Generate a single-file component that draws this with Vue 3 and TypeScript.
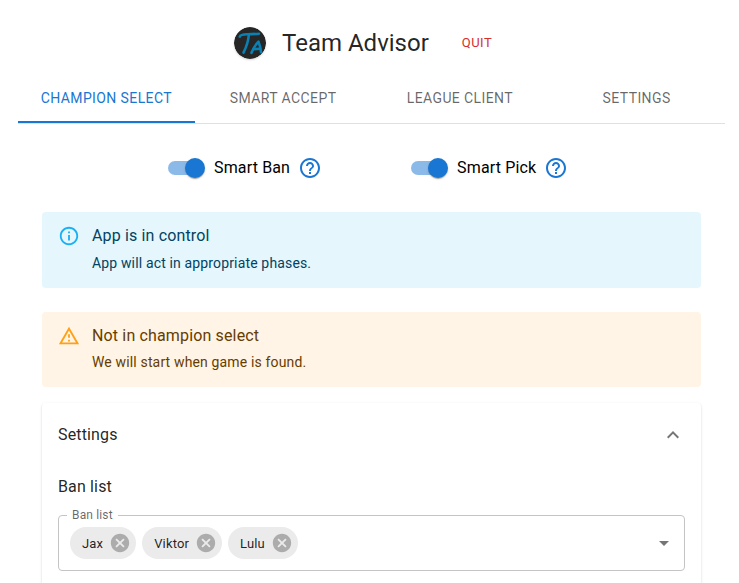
<script setup lang="ts">
import { ref } from 'vue'

interface Toggle { label: string; on: boolean }

const tabs: string[] = ['Champion Select', 'Smart Accept', 'League Client', 'Settings']
const activeTab = ref(0)
const toggles = ref<Toggle[]>([
  { label: 'Smart Ban', on: true },
  { label: 'Smart Pick', on: true },
])
const bans = ref<string[]>(['Jax', 'Viktor', 'Lulu'])
const expanded = ref(true)

function removeBan(name: string): void {
  bans.value = bans.value.filter((b) => b !== name)
}
</script>

<template>
  <main class="app">
    <header class="header">
      <svg class="avatar" viewBox="0 0 32 32">
        <circle cx="16" cy="16" r="16" fill="#262626" />
        <g fill="none" stroke="#0b80b2" stroke-width="2.6" stroke-linecap="round" stroke-linejoin="round">
          <path d="M5.800 9.600C6.500 7.600 9 7.400 13 7.300C17 7.200 21 7 25 6.700" />
          <path d="M14.800 8C14.400 14 12.300 20 9.500 25.600" />
          <path d="M17.500 25.800C19.200 21.500 21.300 17.800 24.500 14.600C25.800 18 26.600 21.500 27 25.200" />
          <path d="M19.500 22.200L26 21.800" />
        </g>
      </svg>
      <h1 class="title">Team Advisor</h1>
      <button class="quit">Quit</button>
    </header>

    <nav class="tabs">
      <button
        v-for="(tab, i) in tabs"
        :key="tab"
        class="tab"
        :class="{ active: i === activeTab }"
        @click="activeTab = i"
      >{{ tab }}</button>
    </nav>

    <section class="panel">
      <div class="toggles">
        <div v-for="t in toggles" :key="t.label" class="toggle">
          <span class="switch" :class="{ on: t.on }" @click="t.on = !t.on"><span class="thumb"></span></span>
          <span class="toggle-label">{{ t.label }}</span>
          <svg class="help" viewBox="0 0 24 24">
            <path d="M11 18h2v-2h-2v2zm1-16C6.480 2 2 6.480 2 12s4.480 10 10 10 10-4.480 10-10S17.520 2 12 2zm0 18c-4.410 0-8-3.590-8-8s3.590-8 8-8 8 3.590 8 8-3.590 8-8 8zm0-14c-2.210 0-4 1.790-4 4h2c0-1.100.9-2 2-2s2 .9 2 2c0 2-3 1.750-3 5h2c0-2.250 3-2.500 3-5 0-2.210-1.790-4-4-4z" />
          </svg>
        </div>
      </div>

      <div class="alert info">
        <svg class="alert-icon" viewBox="0 0 24 24">
          <path d="M11 7h2v2h-2zm0 4h2v6h-2zm1-9C6.480 2 2 6.480 2 12s4.480 10 10 10 10-4.480 10-10S17.520 2 12 2zm0 18c-4.410 0-8-3.590-8-8s3.590-8 8-8 8 3.590 8 8-3.590 8-8 8z" />
        </svg>
        <div class="message">
          <div class="alert-title">App is in control</div>
          <div>App will act in appropriate phases.</div>
        </div>
      </div>

      <div class="alert warning">
        <svg class="alert-icon" viewBox="0 0 24 24">
          <path d="M12 5.990L19.530 19H4.470L12 5.990M12 2L1 21h22L12 2zm1 14h-2v2h2v-2zm0-6h-2v4h2v-4z" />
        </svg>
        <div class="message">
          <div class="alert-title">Not in champion select</div>
          <div>We will start when game is found.</div>
        </div>
      </div>

      <div class="accordion">
        <div class="summary" @click="expanded = !expanded">
          <span>Settings</span>
          <svg class="chevron" :class="{ closed: !expanded }" viewBox="0 0 24 24">
            <path d="M12 8l-6 6 1.410 1.410L12 10.830l4.590 4.580L18 14z" />
          </svg>
        </div>
        <div v-if="expanded" class="details">
          <div class="list-title">Ban list</div>
          <div class="field">
            <span class="field-label">Ban list</span>
            <span v-for="ban in bans" :key="ban" class="chip">
              <span class="chip-label">{{ ban }}</span>
              <svg class="remove" viewBox="0 0 24 24" @click="removeBan(ban)">
                <path d="M12 2C6.470 2 2 6.470 2 12s4.470 10 10 10 10-4.470 10-10S17.530 2 12 2zm5 13.590L15.590 17 12 13.410 8.410 17 7 15.590 10.590 12 7 8.410 8.410 7 12 10.590 15.590 7 17 8.410 13.410 12 17 15.590z" />
              </svg>
            </span>
            <svg class="caret" viewBox="0 0 24 24"><path d="M7 10l5 5 5-5z" /></svg>
          </div>
        </div>
      </div>
    </section>
  </main>
</template>

<style>
body {
  background: #fff;
  overflow: hidden;
}
</style>

<style scoped>
.app {
  box-sizing: border-box;
  width: 739px;
  height: 583px;
  overflow: hidden;
  padding: 11px 14px 0 18px;
  font-family: Roboto, 'Liberation Sans', sans-serif;
  font-size: 16px;
  line-height: 24px;
  letter-spacing: 0.15px;
  color: rgba(0, 0, 0, 0.87);
}
button {
  border: 0;
  padding: 0;
  background: none;
  font-family: inherit;
  text-transform: uppercase;
  cursor: pointer;
}
.header {
  display: flex;
  align-items: center;
  height: 64px;
  padding-left: 216px;
}
.avatar {
  width: 32px;
  height: 32px;
  border-radius: 50%;
  box-shadow: 0 1px 2px rgba(0, 0, 0, 0.16);
}
.title {
  margin: 0 0 0 16px;
  font-size: 24px;
  font-weight: 400;
  line-height: 32px;
  letter-spacing: 0;
}
.quit {
  margin-left: 33px;
  padding-bottom: 2px;
  font-size: 13px;
  letter-spacing: 0.46px;
  color: #d32f2f;
}
.tabs {
  display: flex;
  border-bottom: 1px solid #e0e0e0;
}
.tab {
  box-sizing: border-box;
  flex: 1;
  height: 48px;
  padding-bottom: 1px;
  border-bottom: 2px solid transparent;
  font-size: 14px;
  letter-spacing: 0.4px;
  color: rgba(0, 0, 0, 0.6);
}
.tab.active {
  color: #1976d2;
  border-bottom-color: #1976d2;
}
.panel {
  padding: 25px 24px 0;
}
.toggles {
  display: flex;
  gap: 77px;
  padding-left: 114px;
  margin-bottom: 25px;
}
.toggle {
  display: flex;
  align-items: center;
  height: 38px;
}
.toggle-label {
  color: #000;
}
.switch {
  box-sizing: border-box;
  display: flex;
  align-items: center;
  width: 34px;
  height: 14px;
  margin: 0 12px;
  border-radius: 7px;
  background: #9e9e9e;
}
.switch.on {
  background: #8cbae8;
}
.thumb {
  flex: none;
  width: 20px;
  height: 20px;
  margin-left: -3px;
  border-radius: 50%;
  background: #fafafa;
  box-shadow: 0 2px 1px -1px rgba(0, 0, 0, 0.2), 0 1px 1px rgba(0, 0, 0, 0.14), 0 1px 3px rgba(0, 0, 0, 0.12);
}
.on .thumb {
  margin-left: 17px;
  background: #1976d2;
}
.help {
  width: 24px;
  height: 24px;
  margin-left: 8px;
  fill: #1976d2;
}
.alert {
  display: flex;
  padding: 6px 16px;
  margin-bottom: 24px;
  border-radius: 4px;
  font-size: 14px;
  line-height: 20px;
}
.info {
  background: #e5f6fd;
  color: #014361;
  fill: #03a9f4;
}
.warning {
  margin-bottom: 16px;
  background: #fff4e5;
  color: #663c00;
  fill: #ff9800;
}
.alert-icon {
  flex: none;
  width: 22px;
  height: 22px;
  padding: 7px 0;
  margin-right: 12px;
  opacity: 0.9;
}
.message {
  padding: 8px 0 9px;
}
.alert-title {
  margin-top: -2px;
  margin-bottom: 4.6px;
  font-size: 16px;
  line-height: 24px;
}
.accordion {
  height: 240px;
  border-radius: 4px;
  background: #fff;
  box-shadow: 0 2px 1px -1px rgba(0, 0, 0, 0.2), 0 1px 1px rgba(0, 0, 0, 0.14), 0 1px 3px rgba(0, 0, 0, 0.12);
}
.summary {
  display: flex;
  align-items: center;
  justify-content: space-between;
  height: 64px;
  padding: 0 16px;
}
.chevron {
  width: 24px;
  height: 24px;
  fill: rgba(0, 0, 0, 0.54);
}
.chevron.closed {
  transform: rotate(180deg);
}
.details {
  padding: 8px 16px;
}
.list-title {
  margin-bottom: 16px;
}
.field {
  position: relative;
  box-sizing: border-box;
  display: flex;
  align-items: center;
  gap: 6px;
  height: 56px;
  padding: 0 8px 0 11px;
  border: 1px solid #c4c4c4;
  border-radius: 4px;
}
.field-label {
  position: absolute;
  top: -9px;
  left: 8px;
  padding: 0 5px;
  background: #fff;
  font-size: 12px;
  line-height: 16px;
  color: rgba(0, 0, 0, 0.6);
}
.chip {
  display: flex;
  align-items: center;
  height: 32px;
  padding: 0 5px 0 12px;
  border-radius: 16px;
  background: #ebebeb;
  font-size: 13px;
}
.chip-label {
  padding-top: 2px;
}
.remove {
  width: 22px;
  height: 22px;
  margin-left: 6px;
  fill: #acacac;
}
.caret {
  width: 24px;
  height: 24px;
  margin-left: auto;
  fill: rgba(0, 0, 0, 0.54);
}
</style>
